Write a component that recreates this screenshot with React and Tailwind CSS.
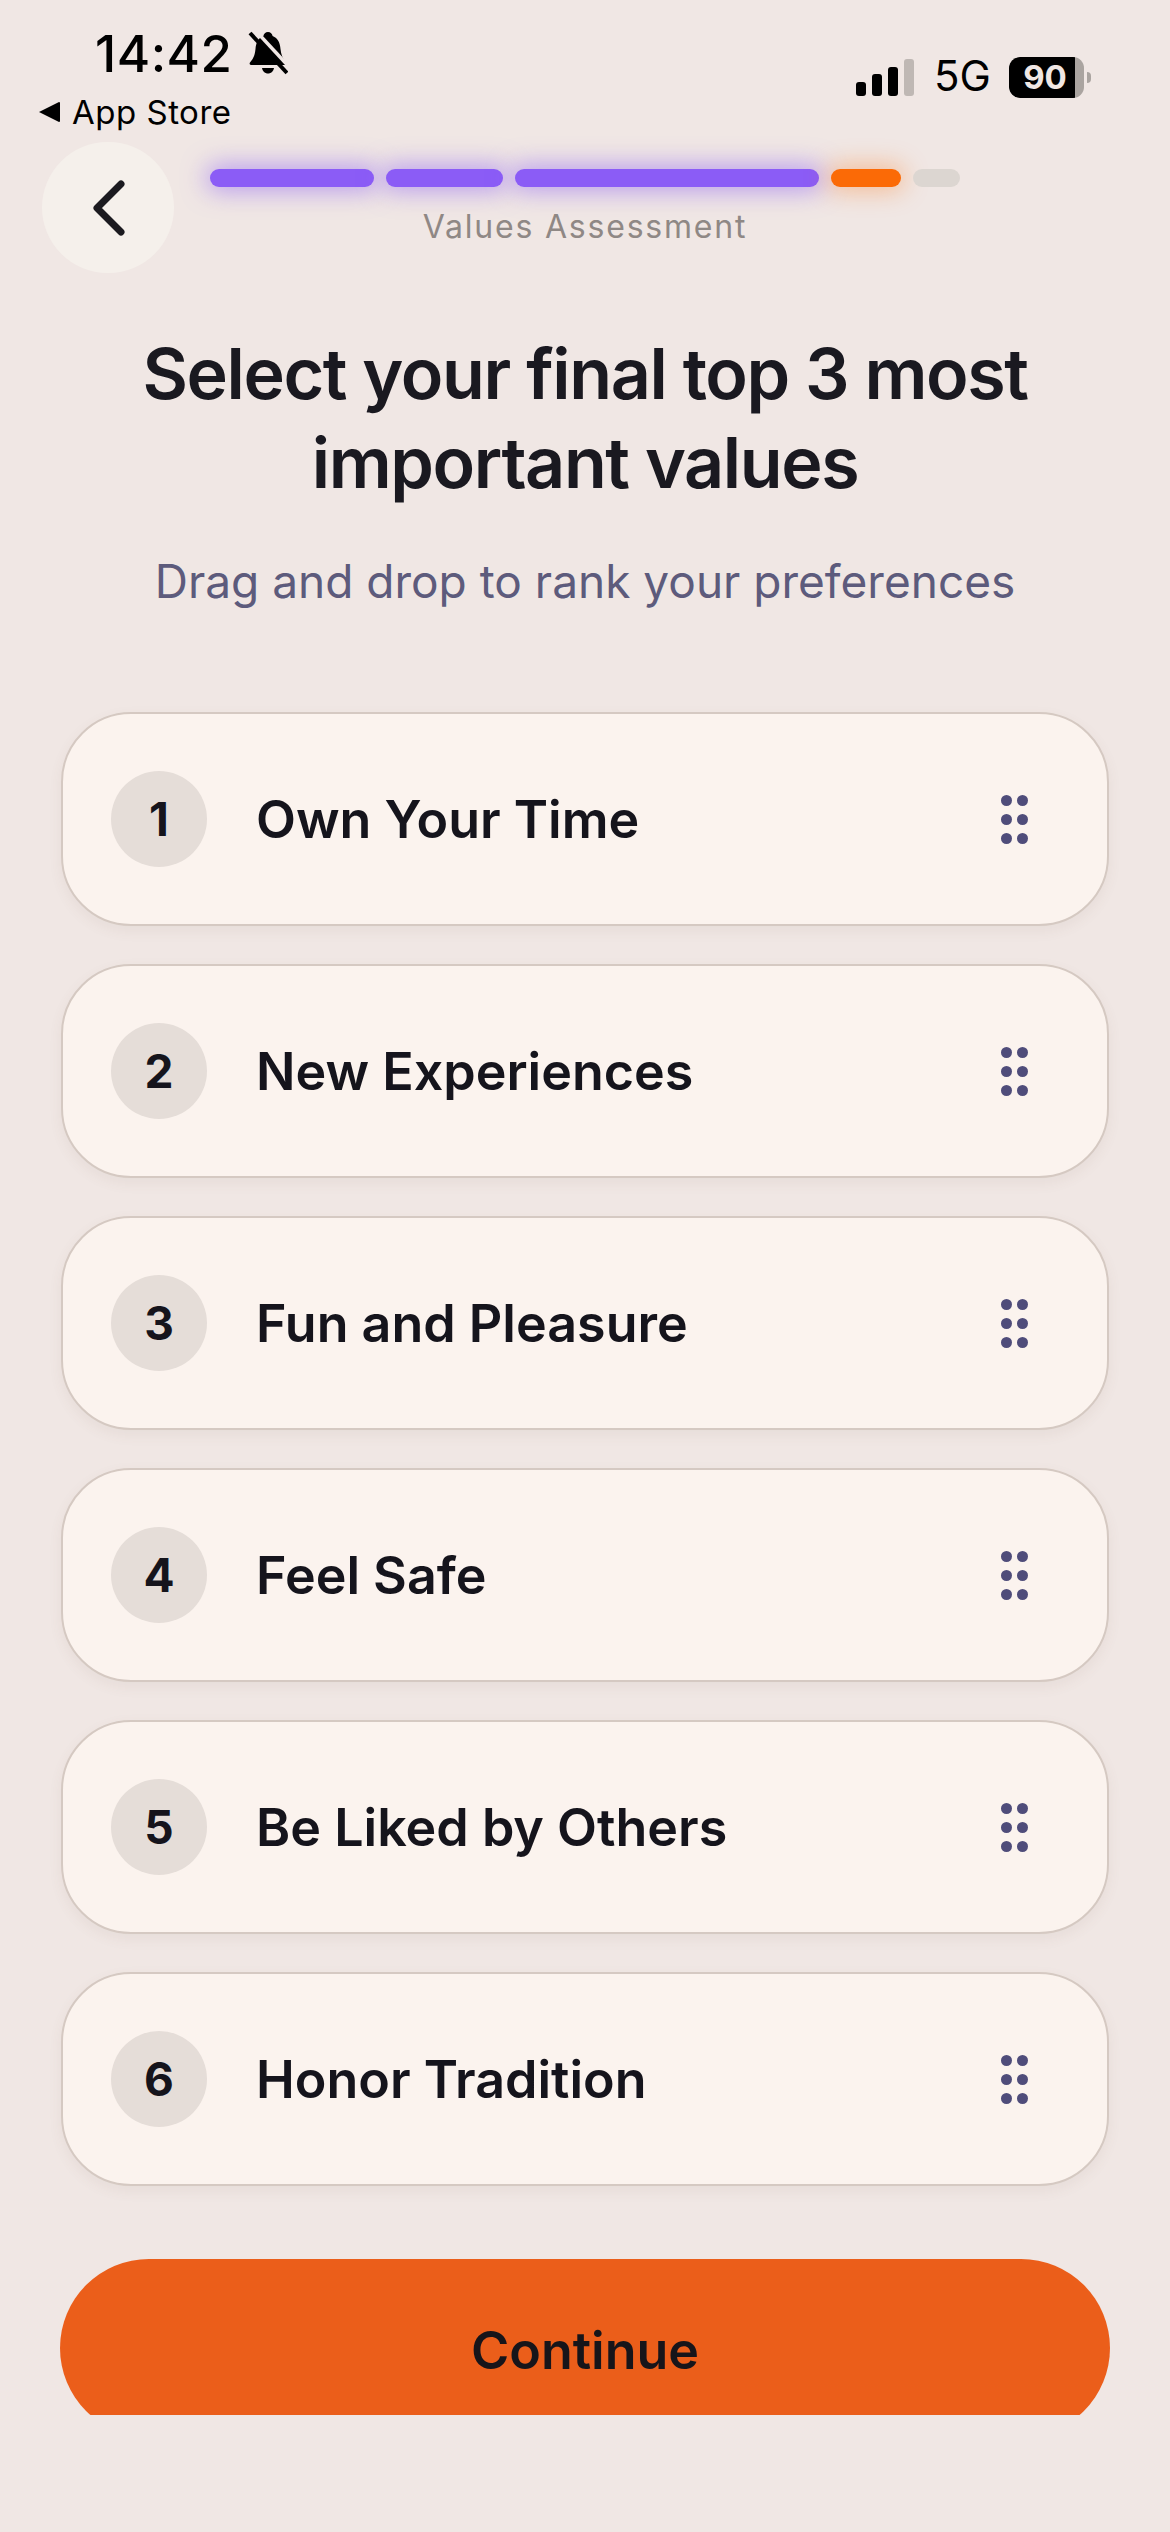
const sans = "font-['Inter','Liberation_Sans',sans-serif]";

const items = ["Own Your Time", "New Experiences", "Fun and Pleasure", "Feel Safe", "Be Liked by Others", "Honor Tradition"];

function Dots() {
  return (
    <div className="grid grid-cols-2 gap-x-[5px] gap-y-2">
      {[0, 1, 2, 3, 4, 5].map((i) => (
        <span key={i} className="block w-[11px] h-[11px] rounded-full bg-[#4f4c7a]" />
      ))}
    </div>
  );
}

function Row({ n, label }) {
  return (
    <div className="h-[214px] rounded-[70px] border-2 border-[#d5c9c2] bg-[#fbf3ee] shadow-[0_5px_14px_rgba(120,90,70,0.07)] flex items-center pl-[48px] pr-[79px]">
      <div className="w-[96px] h-[96px] rounded-full bg-[#e5ddd8] flex items-center justify-center text-[46px] font-bold text-[#15141c]">{n}</div>
      <div className="ml-[49px] pt-[2px] flex-1 text-[52px] font-semibold text-[#15141c] leading-none">{label}</div>
      <Dots />
    </div>
  );
}

const glow = "shadow-[0_0_24px_4px_rgba(139,92,246,0.55)]";

export default function App() {
  return (
    <div className={`w-[1170px] h-[2532px] overflow-hidden bg-[#f0e7e4] ${sans}`}>
      <div className="h-[142px] flex justify-between">
        <div className="pl-[39px] pt-[24px]">
          <div className="flex items-center pl-[56px] h-[58px]">
            <span className="text-[51px] font-medium text-black leading-none tracking-[0.5px]">14:42</span>
            <svg className="ml-[15px]" width="40" height="44" viewBox="0 0 40 44" fill="none">
              <path d="M20 1c2.500 0 4.300 1.800 4.600 4C30 7 32 12 32.500 18c.5 5 2 9.500 5.500 13.500.8 1 .2 2.500-1 2.500H3c-1.300 0-1.800-1.500-1-2.500C6 27 7 23 7.500 18 8 12 10 7 15.400 5 15.700 2.800 17.500 1 20 1z" fill="#000" />
              <path d="M14 37h12c-.6 3.400-3 5.500-6 5.500s-5.400-2.100-6-5.500z" fill="#000" />
              <path d="M7 -1l37 40" stroke="#f0e7e4" strokeWidth="3.500" />
              <path d="M2 2l37 40" stroke="#000" strokeWidth="4" />
            </svg>
          </div>
          <div className="flex items-center mt-[10px]">
            <svg width="21" height="22" viewBox="0 0 21 22"><path d="M0 11 20 1a1 1 0 0 1 1 1v18a1 1 0 0 1-1 1z" fill="#000" /></svg>
            <span className="ml-[12px] text-[33px] font-normal text-black leading-[40px] tracking-[0.5px]">App Store</span>
          </div>
        </div>
        <div className="flex items-start pt-[57px] pr-[79px]">
          <div className="flex items-end gap-[6px] h-[39px]">
            <span className="block w-[10px] h-[14px] rounded-[3px] bg-black" />
            <span className="block w-[10px] h-[22px] rounded-[3px] bg-black" />
            <span className="block w-[10px] h-[29px] rounded-[3px] bg-black" />
            <span className="block w-[10px] h-[37px] rounded-[3px] bg-[#bfb8b4]" />
          </div>
          <span className="ml-[20px] text-[42px] font-normal text-black leading-[38px] w-[75px]">5G</span>
          <div className="w-[75px] h-[41px] rounded-[11px] bg-[#aaa4a0] overflow-hidden">
            <div className="w-[66px] h-[41px] rounded-l-[11px] bg-black flex items-center justify-center pl-[6px] text-[33px] font-bold text-[#f0e7e4] leading-none">90</div>
          </div>
          <span className="block ml-[3px] mt-[15px] w-[4px] h-[11px] rounded-r-full bg-[#aaa4a0]" />
        </div>
      </div>

      <div className="h-[131px] pl-[42px] flex">
        <button className="w-[132px] h-[131px] rounded-full bg-[#f5f0eb] flex items-center justify-center">
          <svg width="40" height="60" viewBox="0 0 40 60" fill="none">
            <path d="M33 6 9 30l24 24" stroke="#1b1a1f" strokeWidth="7" strokeLinecap="round" strokeLinejoin="round" />
          </svg>
        </button>
        <div className="ml-[36px] w-[750px] pt-[27px] flex flex-col">
          <div className="flex gap-3 h-[18px]">
            <span className={`block w-[164px] rounded-full bg-[#8b5cf6] ${glow}`} />
            <span className={`block w-[117px] rounded-full bg-[#8b5cf6] ${glow}`} />
            <span className={`block w-[304px] rounded-full bg-[#8b5cf6] ${glow}`} />
            <span className="block w-[70px] rounded-full bg-[#fb6a06] shadow-[0_0_24px_4px_rgba(251,106,6,0.35)]" />
            <span className="block w-[47px] rounded-full bg-[#dcd6d1]" />
          </div>
          <div className="mt-[20px] w-[750px] text-center text-[32px] leading-[40px] tracking-[1.8px] text-[#8f8885]">Values Assessment</div>
        </div>
      </div>

      <h1 className="mt-[56px] text-center text-[70px] leading-[89px] font-semibold tracking-[-1.4px] text-[#1a1920]">
        Select your final top 3 most
        <br />
        important values
      </h1>
      <p className="mt-[46px] text-center text-[46px] leading-[56px] text-[#5d5b7c]">Drag and drop to rank your preferences</p>

      <div className="mt-[103px] mx-[61px] flex flex-col gap-[38px]">
        {items.map((t, i) => (
          <Row key={t} n={i + 1} label={t} />
        ))}
      </div>

      <div className="mt-[73px] mx-[60px] h-[156px] overflow-hidden">
        <button className="w-full h-[178px] pt-[5px] rounded-[89px] bg-[#eb5e1a] text-[52px] font-semibold text-[#17151a] leading-none">Continue</button>
      </div>
    </div>
  );
}
